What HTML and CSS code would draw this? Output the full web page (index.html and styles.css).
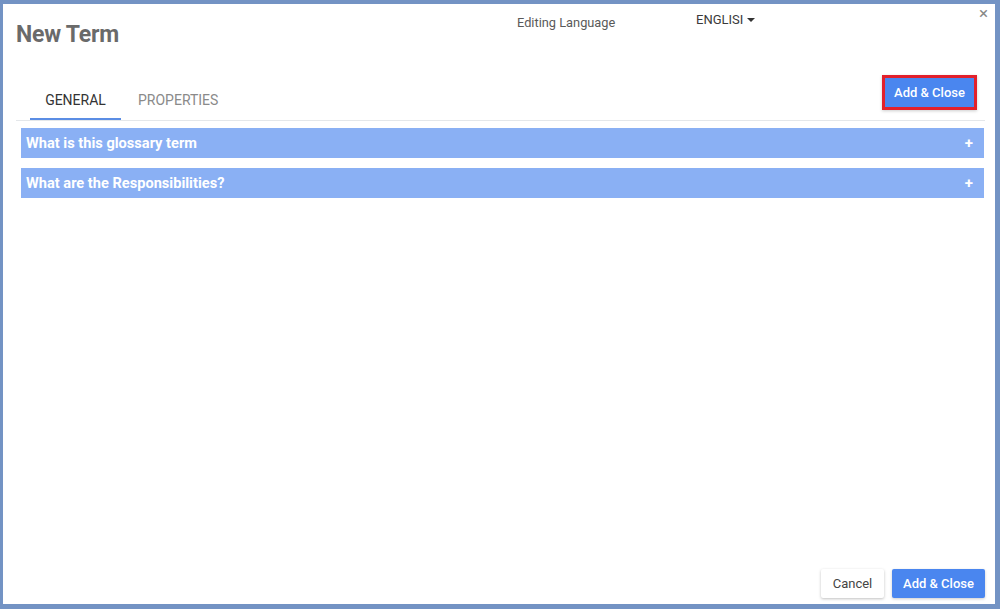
FILE: index.html
```html
<!DOCTYPE html>
<html>
<head>
<meta charset="utf-8">
<link rel="stylesheet" href="styles.css">
</head>
<body>
<div class="frame">
  <div class="dialog">
    <div class="header">
      <h1 class="title">New Term</h1>
      <div class="lang-label">Editing Language</div>
      <div class="lang-select">ENGLISI <span class="caret"></span></div>
      <div class="close">&#215;</div>
    </div>
    <div class="tabbar">
      <div class="tabs">
        <div class="tab active">GENERAL</div>
        <div class="tab">PROPERTIES</div>
      </div>
      <div class="highlight"><button class="btn primary">Add &amp; Close</button></div>
    </div>
    <div class="panels">
      <div class="panel"><span>What is this glossary term</span><span class="plus">+</span></div>
      <div class="panel"><span>What are the Responsibilities?</span><span class="plus">+</span></div>
    </div>
    <div class="footer">
      <button class="btn cancel">Cancel</button>
      <button class="btn primary">Add &amp; Close</button>
    </div>
  </div>
</div>
</body>
</html>
```
FILE: styles.css
```css
html, body {
  margin: 0;
  padding: 0;
  background: #ffffff;
  font-family: Roboto, "Liberation Sans", Arial, sans-serif;
}
.frame {
  width: 1000px;
  height: 609px;
  box-sizing: border-box;
  border-style: solid;
  border-color: #7393c4;
  border-width: 4px 5px 5px 3px;
  background: #ffffff;
}
.dialog {
  height: 100%;
  display: flex;
  flex-direction: column;
  position: relative;
}
.header {
  height: 68px;
  position: relative;
}
.title {
  margin: 0;
  position: absolute;
  left: 13px;
  top: 17px;
  font-size: 23px;
  font-weight: 700;
  color: #6a6a6a;
  letter-spacing: -0.2px;
}
.lang-label {
  position: absolute;
  left: 514px;
  top: 11px;
  font-size: 12.8px;
  color: #5a5a5a;
}
.lang-select {
  position: absolute;
  left: 693px;
  top: 8px;
  font-size: 13px;
  color: #3a3a3a;
  display: flex;
  align-items: center;
  gap: 4px;
}
.caret {
  width: 0;
  height: 0;
  border-left: 4px solid transparent;
  border-right: 4px solid transparent;
  border-top: 4px solid #333;
}
.close {
  position: absolute;
  right: 7px;
  top: -1px;
  font-size: 17px;
  color: #888;
}
.tabbar {
  display: flex;
  justify-content: space-between;
  align-items: flex-end;
  margin: 0 10px 0 13px;
  border-bottom: 1px solid #e4e7ea;
  height: 49px;
  box-sizing: border-box;
}
.tabs {
  display: flex;
  padding-left: 14px;
}
.tab {
  font-size: 14px;
  color: #8a8a8a;
  padding: 0 17px;
  height: 32px;
  line-height: 25px;
  box-sizing: border-box;
}
.tab.active {
  color: #333;
  border-bottom: 2px solid #5b8de4;
  padding: 0 15px 0 15px;
  width: 91px;
  text-align: center;
}
.highlight {
  border: 3px solid #e2202b;
  margin-bottom: 10px;
  margin-right: 8px;
  display: flex;
  box-shadow: 0 1px 3px rgba(0,0,0,0.2);
}
.btn {
  font-family: Roboto, "Liberation Sans", Arial, sans-serif;
  font-size: 13px;
  font-weight: 500;
  border: none;
  border-radius: 2px;
  height: 29px;
  padding: 0 11px;
  cursor: pointer;
}
.highlight .btn {
  border-radius: 0;
  height: 29px;
  width: 89px;
  padding: 0;
}
.btn.primary {
  background: #4a86ef;
  color: #ffffff;
}
.btn.cancel {
  background: #ffffff;
  color: #444;
  font-weight: 400;
  width: 63px;
  padding: 0;
  box-shadow: 0 1px 3px rgba(0,0,0,0.25);
}
.footer .btn.primary {
  width: 93px;
  padding: 0;
  box-shadow: 0 1px 3px rgba(0,0,0,0.2);
}
.panels {
  display: flex;
  flex-direction: column;
  gap: 10px;
  padding: 7px 11px 0 18px;
  flex: 1;
}
.panel {
  height: 30px;
  background: #8ab0f4;
  color: #ffffff;
  font-size: 14.6px;
  font-weight: 700;
  display: flex;
  align-items: center;
  justify-content: space-between;
  padding: 0 11px 0 5px;
}
.plus {
  font-size: 15px;
  font-weight: 700;
}
.footer {
  display: flex;
  justify-content: flex-end;
  gap: 8px;
  padding: 0 10px 6px 0;
}
```
